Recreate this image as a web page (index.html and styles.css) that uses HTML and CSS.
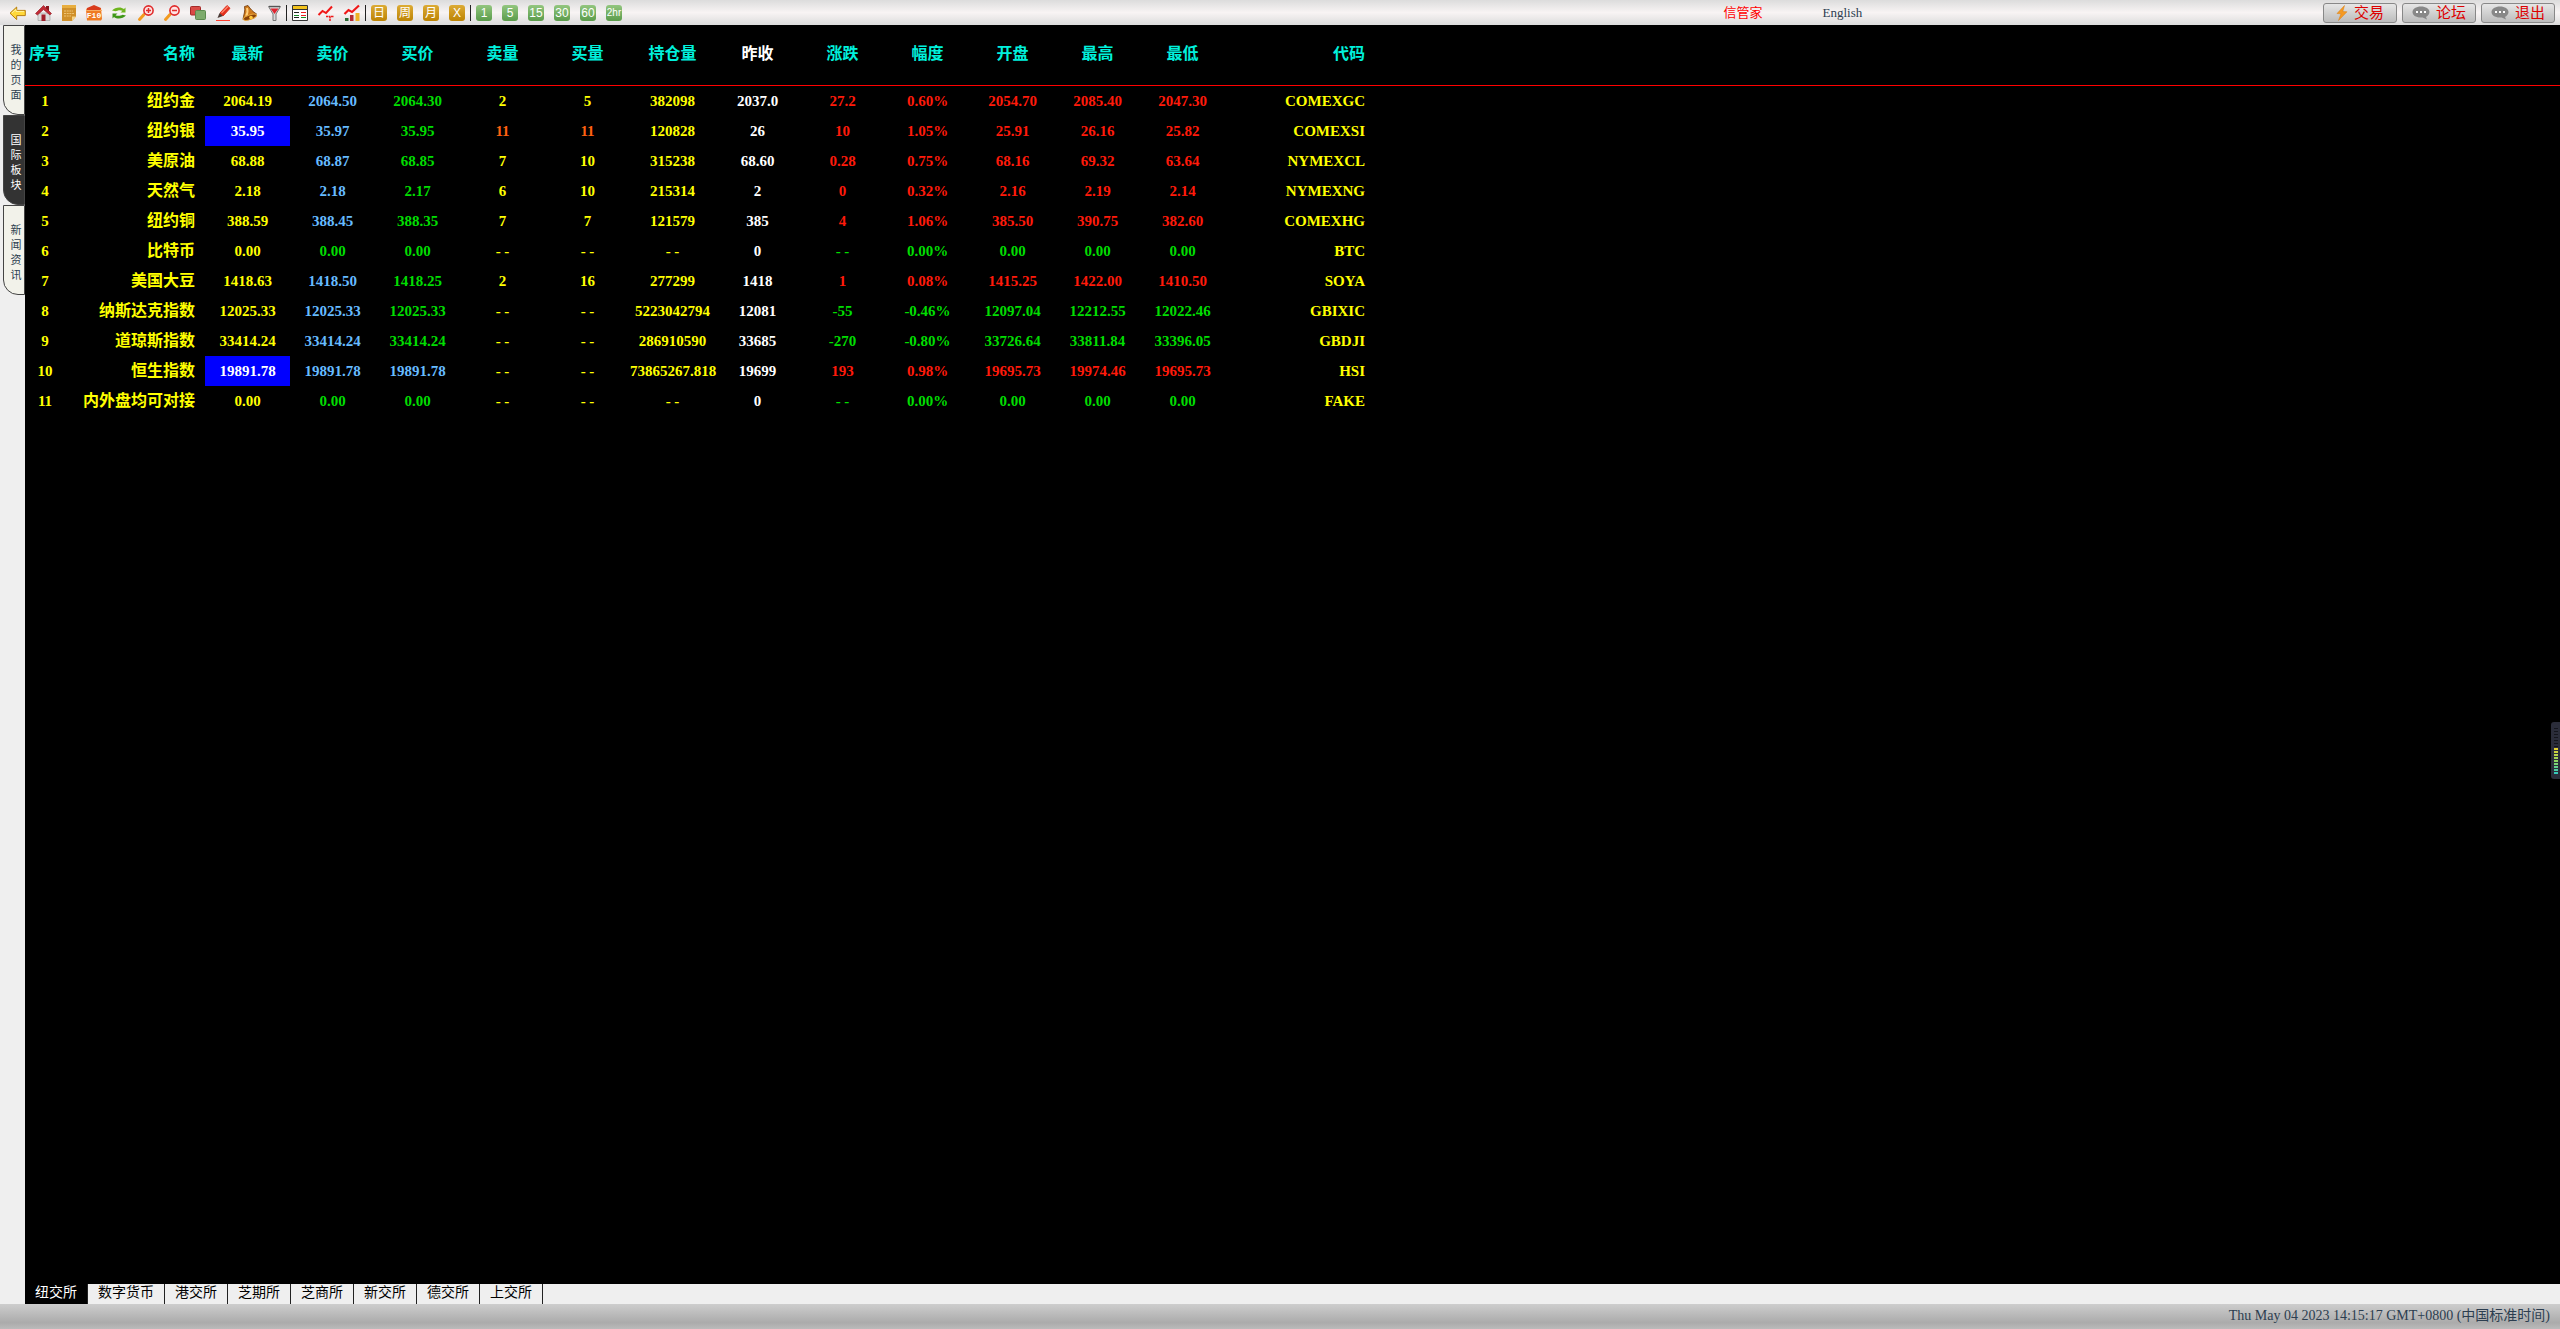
FILE: index.html
```html
<!DOCTYPE html>
<html lang="zh">
<head>
    <meta charset="UTF-8">
    <meta name="viewport" content="width=device-width, initial-scale=1.0">
    <title>信管家</title>
    <link rel="stylesheet" href="styles.css">
</head>
<body>
    <!-- 工具栏 -->
    <header class="toolbar">
        <div class="tool-group">
            <button class="tool" aria-label="返回"><svg viewBox="0 0 16 16"><path d="M2 8.2 8.7 2v3.4h8.6v5.2H8.7v4z" fill="#ffd83a" stroke="#b87e10"/><path d="M4 8 8 4.4v2h8" fill="none" stroke="#fff3a0"/></svg></button>
            <button class="tool" aria-label="首页"><svg viewBox="0 0 16 16"><path d="M4 8h12v7.5H4z" fill="#dcdcdc" stroke="#999" stroke-width=".6"/><path d="M12 1h3v5h-3z" fill="#8c1820"/><path d="M1.5 8.5 9.5.5l8 8-1.6 1.4L9.5 4.6 3.4 10z" fill="#c22a35" stroke="#8c1820" stroke-width=".6"/><path d="M7.5 9.5h4V16h-4z" fill="#a01f2a"/></svg></button>
            <button class="tool" aria-label="公告"><svg viewBox="0 0 16 16"><path d="M2 0h14v11.5L12 16H2z" fill="#d0902a"/><path d="M2 0h14v3H2z" fill="#e8ae3f"/><path d="M16 11.5h-4V16z" fill="#f5d58a"/><path d="M4 6h9M4 8.5h10M4 11h7" stroke="#f6d28a" stroke-width=".8" stroke-dasharray="2 .7"/></svg></button>
            <button class="tool" aria-label="F10"><svg viewBox="0 0 16 16"><path d="M1 3h14l1 11-1 1.5H1L0 5z" fill="#ef7a23"/><path d="M1 3 8 0l7 3-1 2H1z" fill="#d93c1d"/><path d="M0 5h16v1H0z" fill="#f8ac62"/><text x="8" y="13" class="f10">F10</text></svg></button>
            <button class="tool" aria-label="刷新"><svg viewBox="0 0 16 16"><path d="M0 5.5C3 2 9 1.500 12 4l1.500-1.500V7.500H8.500L10.500 5.700C8 4.500 5 5.500 3.500 6.300z" fill="#6fb51e"/><path d="M14 10.500c-3 3.500-9 4-12 1.500L.5 13.500V8.500h5L3.500 10.300c2.500 1.200 5.500.2 7-.6z" fill="#3f9718"/></svg></button>
            <button class="tool" aria-label="放大"><svg viewBox="0 0 16 16"><path d="M6 9.500 1.500 14.500" stroke="#f39a20" stroke-width="3" stroke-linecap="round"/><circle cx="10.500" cy="5.500" r="4.600" fill="#ffe4e4" stroke="#e02c2c" stroke-width="1.600"/><path d="M8 5.500h5M10.500 3v5" stroke="#e02c2c" stroke-width="1.500"/></svg></button>
            <button class="tool" aria-label="缩小"><svg viewBox="0 0 16 16"><path d="M6 9.500 1.500 14.500" stroke="#f39a20" stroke-width="3" stroke-linecap="round"/><circle cx="10.500" cy="5.500" r="4.600" fill="#ffe4e4" stroke="#e02c2c" stroke-width="1.600"/><path d="M8 5.500h5" stroke="#e02c2c" stroke-width="1.500"/></svg></button>
            <button class="tool" aria-label="叠加"><svg viewBox="0 0 16 16"><rect x=".5" y="1.500" width="10" height="8.500" rx="1" fill="#d94a45" stroke="#a42a28"/><rect x="5.500" y="5.500" width="10" height="9" rx="1" fill="#7dab6c" stroke="#5b8a4e"/></svg></button>
            <button class="tool" aria-label="画线"><svg viewBox="0 0 16 16"><path d="M4 8 11 .5l3 2.800L7 11z" fill="#e2311e" stroke="#e2311e"/><path d="m5.500 8 6.500-6.500" stroke="#ff8a70" stroke-width="1.200"/><path d="M3.500 8 1.500 13l5.500-2z" fill="#4b3a36"/><path d="M0 15.500h14" stroke="#ff3c2c"/></svg></button>
            <button class="tool" aria-label="预警"><svg viewBox="0 0 16 16"><path d="M2.500 1.500 6 .5C8.500 4 10.500 6.500 14.500 9L1 14.500C1.500 10 3.500 6 2.500 1.500z" fill="#cf7a1c" stroke="#6b3506" stroke-width=".8"/><path d="M5 3c1 3 .3 6-1 8" stroke="#ffce7a" fill="none" stroke-width="2"/><ellipse cx="8" cy="12.200" rx="6.800" ry="2.300" transform="rotate(-18 8 12.200)" fill="#8a4208" stroke="#e4a23a"/><circle cx="9" cy="12.500" r="1.800" fill="#ffc93c"/></svg></button>
            <button class="tool tool-narrow" aria-label="筛选"><svg viewBox="0 0 13 16"><path d="M.5 1.500h12L8 9v6.500H5V9z" fill="#d9d9d9" stroke="#777"/><path d="M2.500 3.500h8L6.500 9z" fill="#e02430"/><path d="M1 1.500h11" stroke="#555" stroke-width="1.400"/></svg></button>
        </div>
        <span class="divider"></span>
        <div class="tool-group">
            <button class="tool" aria-label="报价"><svg viewBox="0 0 16 16"><path d="M.5.5h15v15H.5z" fill="#fff" stroke="#333"/><path d="M1 2.500h14" stroke="#f2c21c" stroke-width="3"/><path d="M1 4.500h14" stroke="#333"/><path d="M2 7.500h5M2 12.500h5" stroke="#222"/><path d="M9 7.500h5M9 10.500h5" stroke="#e22"/><path d="M2 10.500h5M9 12.500h5" stroke="#1a8c2a"/></svg></button>
            <button class="tool" aria-label="分时"><svg viewBox="0 0 16 16"><path d="m.5 10 4-4L8 8l6-6.500" fill="none" stroke="#f01818" stroke-width="2"/><path d="M8 11.500h8M12 11.500V16" stroke="#f01818" stroke-width="1.500" stroke-dasharray="2 .5"/></svg></button>
            <button class="tool" aria-label="K线"><svg viewBox="0 0 16 16"><path d="M1 13h3.500v3H1z" fill="#2d6a35"/><path d="M6 10h3.500v6H6z" fill="#b52b32"/><path d="M11.500 8H15.500v8h-4z" fill="#efb324"/><path d="m.5 9 4-4L8 7l7-6.500" fill="none" stroke="#f01818" stroke-width="2.200"/></svg></button>
        </div>
        <span class="divider"></span>
        <div class="tool-group">
            <button class="tool period gold">日</button>
            <button class="tool period gold">周</button>
            <button class="tool period gold">月</button>
            <button class="tool period gold">X</button>
        </div>
        <span class="divider"></span>
        <div class="tool-group">
            <button class="tool period green">1</button>
            <button class="tool period green">5</button>
            <button class="tool period green">15</button>
            <button class="tool period green">30</button>
            <button class="tool period green">60</button>
            <button class="tool period green small">2hr</button>
        </div>
        <nav class="top-links">
            <a href="#" class="brand">信管家</a>
            <a href="#">English</a>
        </nav>
        <div class="actions">
            <button class="btn"><svg class="bolt" viewBox="0 0 12 16"><path d="M8.500.5 1 8.500l4 .3-2.500 6.700L11 6.800 6.800 6.500z" fill="#f59a23" stroke="#d97c10" stroke-width=".5"/></svg>交易</button>
            <button class="btn"><svg class="bubble" viewBox="0 0 18 14"><path d="M9 .5c4.800 0 8.500 2.400 8.500 5.600 0 2.200-1.400 3.800-3.500 4.800l1 2.600-4.300-2C4.500 12.200.5 9.500.5 6.100.5 2.900 4.200.5 9 .5z" fill="#888"/><path d="M4 6h2M8 6h2M12 6h2" stroke="#fff" stroke-width="2"/></svg>论坛</button>
            <button class="btn"><svg class="bubble" viewBox="0 0 18 14"><path d="M9 .5c4.800 0 8.500 2.400 8.500 5.600 0 2.200-1.400 3.800-3.500 4.800l1 2.600-4.300-2C4.500 12.200.5 9.500.5 6.100.5 2.900 4.200.5 9 .5z" fill="#888"/><path d="M4 6h2M8 6h2M12 6h2" stroke="#fff" stroke-width="2"/></svg>退出</button>
        </div>
    </header>

    <div class="main">
        <!-- 左侧竖排标签 -->
        <nav class="sidebar">
            <a href="#" class="side-tab"><span>我的页面</span></a>
            <a href="#" class="side-tab active"><span>国际板块</span></a>
            <a href="#" class="side-tab"><span>新闻资讯</span></a>
        </nav>

        <div class="content">
            <!-- 行情表 -->
            <div class="quotes">
                <table>
                    <colgroup>
                        <col class="c-index"><col class="c-name"><col span="12" class="c-num"><col class="c-code"><col>
                    </colgroup>
                    <thead>
                        <tr><th>序号</th><th class="name">名称</th><th>最新</th><th>卖价</th><th>买价</th><th>卖量</th><th>买量</th><th>持仓量</th><th class="white">昨收</th><th>涨跌</th><th>幅度</th><th>开盘</th><th>最高</th><th>最低</th><th class="code">代码</th><th></th></tr>
                    </thead>
                    <tbody>
                        <tr><td>1</td><td class="name">纽约金</td><td>2064.19</td><td class="sell">2064.50</td><td class="down">2064.30</td><td>2</td><td>5</td><td>382098</td><td class="white">2037.0</td><td class="up">27.2</td><td class="up">0.60%</td><td class="up">2054.70</td><td class="up">2085.40</td><td class="up">2047.30</td><td class="code">COMEXGC</td><td></td></tr>
                        <tr><td>2</td><td class="name">纽约银</td><td class="flash">35.95</td><td class="sell">35.97</td><td class="down">35.95</td><td class="big">11</td><td class="big">11</td><td>120828</td><td class="white">26</td><td class="up">10</td><td class="up">1.05%</td><td class="up">25.91</td><td class="up">26.16</td><td class="up">25.82</td><td class="code">COMEXSI</td><td></td></tr>
                        <tr><td>3</td><td class="name">美原油</td><td>68.88</td><td class="sell">68.87</td><td class="down">68.85</td><td>7</td><td>10</td><td>315238</td><td class="white">68.60</td><td class="up">0.28</td><td class="up">0.75%</td><td class="up">68.16</td><td class="up">69.32</td><td class="up">63.64</td><td class="code">NYMEXCL</td><td></td></tr>
                        <tr><td>4</td><td class="name">天然气</td><td>2.18</td><td class="sell">2.18</td><td class="down">2.17</td><td>6</td><td>10</td><td>215314</td><td class="white">2</td><td class="up">0</td><td class="up">0.32%</td><td class="up">2.16</td><td class="up">2.19</td><td class="up">2.14</td><td class="code">NYMEXNG</td><td></td></tr>
                        <tr><td>5</td><td class="name">纽约铜</td><td>388.59</td><td class="sell">388.45</td><td class="down">388.35</td><td>7</td><td>7</td><td>121579</td><td class="white">385</td><td class="up">4</td><td class="up">1.06%</td><td class="up">385.50</td><td class="up">390.75</td><td class="up">382.60</td><td class="code">COMEXHG</td><td></td></tr>
                        <tr><td>6</td><td class="name">比特币</td><td>0.00</td><td class="down">0.00</td><td class="down">0.00</td><td>- -</td><td>- -</td><td>- -</td><td class="white">0</td><td class="down">- -</td><td class="down">0.00%</td><td class="down">0.00</td><td class="down">0.00</td><td class="down">0.00</td><td class="code">BTC</td><td></td></tr>
                        <tr><td>7</td><td class="name">美国大豆</td><td>1418.63</td><td class="sell">1418.50</td><td class="down">1418.25</td><td>2</td><td>16</td><td>277299</td><td class="white">1418</td><td class="up">1</td><td class="up">0.08%</td><td class="up">1415.25</td><td class="up">1422.00</td><td class="up">1410.50</td><td class="code">SOYA</td><td></td></tr>
                        <tr><td>8</td><td class="name">纳斯达克指数</td><td>12025.33</td><td class="sell">12025.33</td><td class="down">12025.33</td><td>- -</td><td>- -</td><td>5223042794</td><td class="white">12081</td><td class="down">-55</td><td class="down">-0.46%</td><td class="down">12097.04</td><td class="down">12212.55</td><td class="down">12022.46</td><td class="code">GBIXIC</td><td></td></tr>
                        <tr><td>9</td><td class="name">道琼斯指数</td><td>33414.24</td><td class="sell">33414.24</td><td class="down">33414.24</td><td>- -</td><td>- -</td><td>286910590</td><td class="white">33685</td><td class="down">-270</td><td class="down">-0.80%</td><td class="down">33726.64</td><td class="down">33811.84</td><td class="down">33396.05</td><td class="code">GBDJI</td><td></td></tr>
                        <tr><td>10</td><td class="name">恒生指数</td><td class="flash">19891.78</td><td class="sell">19891.78</td><td class="sell">19891.78</td><td>- -</td><td>- -</td><td>73865267.818</td><td class="white">19699</td><td class="up">193</td><td class="up">0.98%</td><td class="up">19695.73</td><td class="up">19974.46</td><td class="up">19695.73</td><td class="code">HSI</td><td></td></tr>
                        <tr><td>11</td><td class="name">内外盘均可对接</td><td>0.00</td><td class="down">0.00</td><td class="down">0.00</td><td>- -</td><td>- -</td><td>- -</td><td class="white">0</td><td class="down">- -</td><td class="down">0.00%</td><td class="down">0.00</td><td class="down">0.00</td><td class="down">0.00</td><td class="code">FAKE</td><td></td></tr>
                    </tbody>
                </table>
            </div>

            <!-- 交易所 -->
            <nav class="exchanges">
                <a href="#" class="active">纽交所</a>
                <a href="#">数字货币</a>
                <a href="#">港交所</a>
                <a href="#">芝期所</a>
                <a href="#">芝商所</a>
                <a href="#">新交所</a>
                <a href="#">德交所</a>
                <a href="#">上交所</a>
            </nav>
        </div>
    </div>

    <footer class="status">Thu May 04 2023 14:15:17 GMT+0800 (中国标准时间)</footer>

    <div class="meter"><span class="meter-off"></span><span class="meter-on"></span></div>
</body>
</html>
```

FILE: styles.css
```css
* {
    margin: 0;
    padding: 0;
    box-sizing: border-box;
}

body {
    font-family: 'Liberation Serif', 'Noto Sans CJK SC', serif;
    font-size: 14px;
    color: #2c3e50;
    background: #efefef;
    height: 100vh;
    display: flex;
    flex-direction: column;
    overflow: hidden;
}

a {
    color: inherit;
    text-decoration: none;
}

button {
    border: none;
    background: none;
    font-family: inherit;
    cursor: pointer;
}

/* 工具栏 */
.toolbar {
    display: flex;
    align-items: center;
    flex: none;
    height: 25px;
    padding: 0 5px 0 8px;
    background: linear-gradient(#dcdcdc, #f8f4f4 50%, #dcdcdc);
}

.tool-group {
    display: flex;
    gap: 10px;
}

.tool {
    width: 16px;
    height: 16px;
}

.tool svg {
    display: block;
    width: 100%;
    height: 16px;
    overflow: visible;
}

.tool-narrow {
    width: 13px;
}

.f10 {
    font-family: 'Liberation Mono', monospace;
    font-size: 8px;
    font-weight: bold;
    text-anchor: middle;
    fill: #fff;
}

.divider {
    width: 1px;
    height: 16px;
    margin: 0 5px;
    background: #222;
}

.period {
    display: flex;
    align-items: center;
    justify-content: center;
    border-radius: 3px;
    font-family: 'Liberation Sans', 'Noto Sans CJK SC', sans-serif;
    font-size: 12px;
    line-height: 16px;
    color: #fff;
}

.period.small {
    font-size: 10px;
}

.gold {
    background: linear-gradient(#dcab35, #bd8404);
}

.green {
    background: linear-gradient(#93c67f, #5b9c4b);
}

.top-links {
    display: flex;
    justify-content: flex-end;
    gap: 60px;
    flex: 1;
    font-size: 13px;
    line-height: 24px;
}

.brand {
    color: #ff0000;
}

.actions {
    display: flex;
    justify-content: flex-end;
    gap: 5px;
    width: 27.2%;
    padding-top: 1px;
}

.btn {
    display: flex;
    align-items: center;
    justify-content: center;
    gap: 6px;
    width: 74px;
    height: 20px;
    border: 1px solid #888;
    border-radius: 3px;
    background: linear-gradient(#e6e6e6, #bcbcbc);
    font-size: 15px;
    line-height: 18px;
    color: #dd0000;
}

.bolt {
    width: 12px;
    height: 16px;
}

.bubble {
    width: 18px;
    height: 14px;
}

.main {
    display: flex;
    flex: 1;
    min-height: 0;
}

/* 左侧竖排标签 */
.sidebar {
    flex: none;
    width: 25px;
    padding-left: 3px;
}

.side-tab {
    display: flex;
    align-items: center;
    justify-content: center;
    width: 22px;
    height: 90px;
    padding: 6px 0 0 4px;
    border: 1px solid #444;
    border-bottom-left-radius: 15px;
    background: #f2f2ea;
    font-size: 11px;
    line-height: 15px;
}

.side-tab span {
    width: 11px;
}

.side-tab.active {
    background: #333;
    color: #fff;
}

.content {
    display: flex;
    flex-direction: column;
    flex: 1;
    min-width: 0;
}

/* 行情表 */
.quotes {
    flex: 1;
    background: #000;
}

table {
    width: 100%;
    table-layout: fixed;
    border-collapse: separate;
    border-spacing: 0;
    font-size: 15px;
    font-weight: bold;
    color: #ffff00;
}

.c-index {
    width: 40px;
}

.c-name {
    width: 140px;
}

.c-num {
    width: 85px;
}

.c-code {
    width: 150px;
}

th {
    height: 61px;
    padding-bottom: 2px;
    border-bottom: 1px solid #ff0000;
    font-size: 16px;
    line-height: 20px;
    white-space: nowrap;
    color: #00f0dc;
}

td {
    height: 30px;
    line-height: 20px;
    text-align: center;
    white-space: nowrap;
}

.name,
.code {
    padding-right: 10px;
    text-align: right;
}

td.name {
    font-size: 16px;
}

.white {
    color: #fff;
}

.sell {
    color: #66bbff;
}

.up {
    color: #ff1a0a;
}

.down {
    color: #00dd00;
}

.big {
    color: #ff6010;
}

.flash {
    background: #0000ff;
    color: #fff;
}

/* 交易所 */
.exchanges {
    display: flex;
    flex: none;
    height: 20px;
    background: #efefef;
    font-size: 14px;
    line-height: 18px;
    color: #000;
}

.exchanges a {
    padding: 0 10px;
    border-right: 1px solid #222;
}

.exchanges .active {
    background: #000;
    color: #fff;
}

.status {
    flex: none;
    height: 25px;
    padding-right: 10px;
    background: linear-gradient(#cdcdcd, #ababab 75%, #bbb);
    line-height: 24px;
    text-align: right;
}

/* 右侧悬浮条 */
.meter {
    position: fixed;
    right: 0;
    top: 722px;
    width: 9px;
    height: 57px;
    padding: 6px 2px 5px 3px;
    border-radius: 3px 0 0 3px;
    background: #2b2d3a;
}

.meter span {
    display: block;
}

.meter-off {
    height: 20px;
    background: repeating-linear-gradient(#14151c 0 1px, #2b2d3a 1px 3px);
}

.meter-on {
    height: 26px;
    background: repeating-linear-gradient(transparent 0 2px, #2b2d3a 2px 3px), linear-gradient(#e8d030, #90d860 50%, #30c8c0);
}
```
